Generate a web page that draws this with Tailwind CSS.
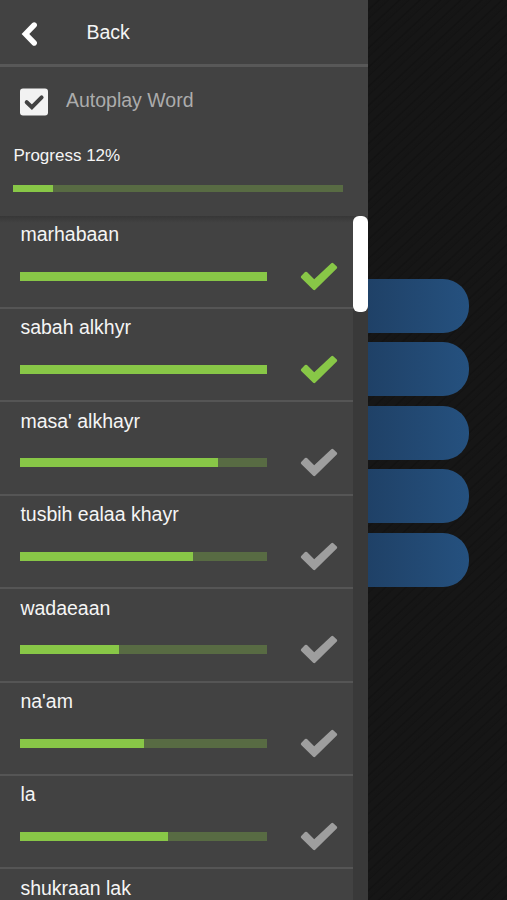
<!DOCTYPE html>
<html lang="en">
<head>
  <meta charset="UTF-8">
  <meta name="viewport" content="width=device-width, initial-scale=1.0">
  <title>Words</title>
  <script src="https://cdn.jsdelivr.net/npm/@tailwindcss/browser@4"></script>
</head>
<body class="h-[900px] overflow-hidden bg-[#141414] font-['Liberation_Sans',Arial,sans-serif] text-[19.5px] text-[#f5f5f5]">
  <div class="relative flex h-full bg-[repeating-linear-gradient(137deg,#161616_0px,#161616_5px,#121212_6.5px,#161616_8px,#151515_12px,#131313_13px,#161616_14px)]">

    <!-- Drawer -->
    <aside class="flex h-full w-[367.5px] shrink-0 flex-col bg-[#424242]">
      <header class="flex h-[67px] shrink-0 items-center border-b-3 border-[#585858] pl-[21px]">
        <svg class="mt-[4px] h-6 w-[17px]" viewBox="0 0 17 24" fill="none" stroke="#fff" stroke-width="5.4" stroke-linecap="round" stroke-linejoin="miter">
          <path d="M13.2 3 4.4 12l8.8 9"/>
        </svg>
        <h1 class="-mt-px ml-[48.5px] leading-6">Back</h1>
      </header>

      <section class="h-[148.7px] shrink-0 pl-[13.4px]">
        <div class="flex items-center pt-[21px] pl-[6.6px]">
          <svg class="h-[28px] w-[28px]" viewBox="0 0 28 28">
            <rect x="0" y="0.5" width="28" height="27" rx="3" fill="#f2f2f2"/>
            <path d="M6.7 14.2 11.9 19.2 21.6 9.4" fill="none" stroke="#424242" stroke-width="4" stroke-linecap="round"/>
          </svg>
          <span class="-mt-[5px] ml-[18px] leading-6 text-[#acacac]">Autoplay Word</span>
        </div>
        <p class="mt-[30px] text-[17px] leading-5">Progress 12%</p>
        <div class="mt-[19.4px] h-[7px] w-[330px] bg-[#586b43]">
          <div class="h-full bg-[#88c747]" style="width: 12%"></div>
        </div>
      </section>

      <!-- Word list -->
      <div class="relative flex min-h-0 flex-1">
        <ul id="words" class="w-[352.5px] overflow-hidden"></ul>
        <div class="w-[15px] bg-[#393939]">
          <div class="h-[96px] rounded-[6px] bg-white"></div>
        </div>
        <div class="absolute top-0 left-0 h-[7px] w-[352.5px] bg-linear-to-b from-[#373737] to-transparent"></div>
      </div>
    </aside>

    <!-- Answer buttons behind the drawer -->
    <main class="flex flex-col gap-[9.5px] pt-[278.5px]">
      <div class="h-[54px] w-[101px] rounded-r-[26px] bg-linear-to-r from-[#1f4167] to-[#25517f]"></div>
      <div class="h-[54px] w-[101px] rounded-r-[26px] bg-linear-to-r from-[#1f4167] to-[#25517f]"></div>
      <div class="h-[54px] w-[101px] rounded-r-[26px] bg-linear-to-r from-[#1f4167] to-[#25517f]"></div>
      <div class="h-[54px] w-[101px] rounded-r-[26px] bg-linear-to-r from-[#1f4167] to-[#25517f]"></div>
      <div class="h-[54px] w-[101px] rounded-r-[26px] bg-linear-to-r from-[#1f4167] to-[#25517f]"></div>
    </main>
  </div>

  <script>
    const words = [
      { text: 'marhabaan', progress: 100 },
      { text: 'sabah alkhyr', progress: 100 },
      { text: "masa' alkhayr", progress: 80 },
      { text: 'tusbih ealaa khayr', progress: 70 },
      { text: 'wadaeaan', progress: 40 },
      { text: "na'am", progress: 50 },
      { text: 'la', progress: 60 },
      { text: 'shukraan lak', progress: 0 }
    ];

    // Each row: name, progress bar and check mark (green once learned)
    document.getElementById('words').innerHTML = words.map(word => `
      <li class="h-[93.4px] border-b-2 border-[#555555] pt-[6.3px] pl-[20.4px]">
        <p class="leading-6">${word.text}</p>
        <div class="mt-[15.6px] flex items-center">
          <div class="h-[9px] w-[246.5px] bg-[#586b43]">
            <div class="h-full bg-[#88c747]" style="width: ${word.progress}%"></div>
          </div>
          <svg class="ml-[33px] h-[29px] w-[38px] ${word.progress === 100 ? 'text-[#88c747]' : 'text-[#9e9e9e]'}" viewBox="0 0 38 29">
            <path d="M1.2 14 5 10.1Q6 9.2 7 10.1L14.2 17.2 31.3 1.2Q32.3.3 33.3 1.2L36.8 4.6Q37.7 5.6 36.8 6.5L15.2 27.7Q14.2 28.6 13.2 27.7L1.2 15.9Q.3 15 1.2 14Z" fill="currentColor"/>
          </svg>
        </div>
      </li>
    `).join('');
  </script>
</body>
</html>
